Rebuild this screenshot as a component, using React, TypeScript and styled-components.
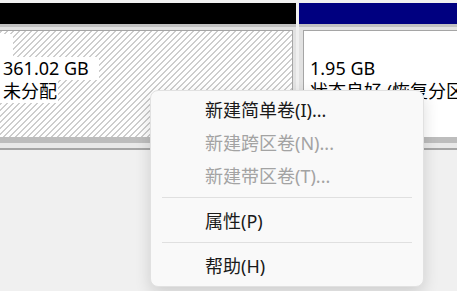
import React from 'react';
import styled, { createGlobalStyle } from 'styled-components';

const GlobalStyle = createGlobalStyle`
    html, body {
        margin: 0;
        padding: 0;
        background: #f0f0f0;
    }
    body {
        font-family: "Noto Sans", "Noto Sans CJK SC", sans-serif;
    }
`

const Screen = styled.div`
    position: relative;
    width: 457px;
    height: 291px;
    overflow: hidden;
    box-sizing: border-box;
    padding-top: 3px;
    background: #f0f0f0;
`
const DiskRow = styled.div`
    display: flex;
    gap: 3px;
    margin-left: -8px;
`
const Partition = styled.div<{ $width: number }>`
    width: ${p => p.$width}px;
    flex-shrink: 0;
    display: flex;
    flex-direction: column;
`
const Strip = styled.div<{ $color: string }>`
    height: 21px;
    background: ${p => p.$color};
`
const Frame = styled.div`
    height: 113px;
    box-sizing: border-box;
    display: flex;
    border-top: 3px solid #c1c1c1;
    background: #e2e2e2;
    padding: 3px 3px 0 4px;
`
const Region = styled.div<{ $hatched?: boolean }>`
    flex: 1;
    border: 1px solid #a5a5a5;
    border-bottom: none;
    padding-top: 3px;
    white-space: nowrap;
    overflow: hidden;
    background: ${p => p.$hatched
        ? 'repeating-linear-gradient(135deg, #ffffff 0 2.7px, #cdcdcd 2.7px 4.24px)'
        : '#ffffff'};
`
const Label = styled.div`
    width: fit-content;
    height: 23px;
    line-height: 23px;
    padding: 0 1px 0 6px;
    background: #ffffff;
    color: #000000;
    font-size: 18px;
`
const DiskFooter = styled.div`
    height: 13px;
    box-sizing: border-box;
    border-top: 6px solid #bdbdbd;
    border-bottom: 2px solid #a6a6a6;
    background: #e9e9e9;
`
const Menu = styled.div`
    position: absolute;
    left: 150px;
    top: 90px;
    width: 274px;
    height: 197px;
    box-sizing: border-box;
    padding: 3px 0;
    background: #f9f9f9;
    border: 1px solid #e1e1e1;
    border-radius: 8px;
    box-shadow: 0 6px 16px rgba(0, 0, 0, 0.14);
    font-size: 18px;
`
const MenuItem = styled.div<{ $disabled?: boolean }>`
    height: 33px;
    line-height: 33px;
    padding-left: 54px;
    white-space: nowrap;
    color: ${p => p.$disabled ? '#a3a3a3' : '#1a1a1a'};
`
const Separator = styled.div`
    height: 1px;
    margin: 4px 11px 7px;
    background: #e0e0e0;
`

const App = () => {
    return (
        <Screen>
            <GlobalStyle />
            <DiskRow>
                <Partition $width={304}>
                    <Strip $color="#000000" />
                    <Frame>
                        <Region $hatched>
                            <Label>{'\u00a0\u00a0'}</Label>
                            <Label>{'361.02 GB\u00a0\u00a0'}</Label>
                            <Label>未分配</Label>
                        </Region>
                    </Frame>
                </Partition>
                <Partition $width={260}>
                    <Strip $color="#000080" />
                    <Frame>
                        <Region>
                            <Label>{'\u00a0'}</Label>
                            <Label>1.95 GB</Label>
                            <Label>状态良好 (恢复分区)</Label>
                        </Region>
                    </Frame>
                </Partition>
            </DiskRow>
            <DiskFooter />
            <Menu>
                <MenuItem>新建简单卷(I)...</MenuItem>
                <MenuItem $disabled>新建跨区卷(N)...</MenuItem>
                <MenuItem $disabled>新建带区卷(T)...</MenuItem>
                <Separator />
                <MenuItem>属性(P)</MenuItem>
                <Separator />
                <MenuItem>帮助(H)</MenuItem>
            </Menu>
        </Screen>
    )
}
export default App
